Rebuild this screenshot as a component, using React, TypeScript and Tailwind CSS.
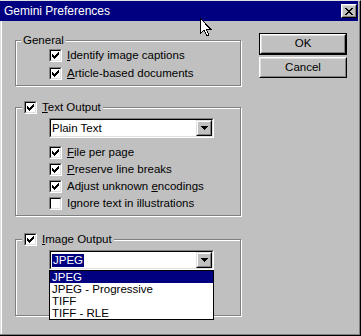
import React from "react";

const FONT = { fontFamily: '"Liberation Sans", Arial, sans-serif' };

function Check({ checked }: { checked: boolean }) {
  return (
    <div className="w-[13px] h-[13px] shrink-0 border border-t-[#808080] border-l-[#808080] border-b-white border-r-white">
      <div className="relative w-[11px] h-[11px] border border-t-black border-l-black border-b-[#dfdfdf] border-r-[#dfdfdf] bg-white">
        {checked && (
          <svg width="7" height="7" viewBox="0 0 7 7" className="absolute left-[1px] top-[1px]" shapeRendering="crispEdges">
            <path d="M0 2h1v3H0z M1 3h1v3H1z M2 4h1v3H2z M3 3h1v3H3z M4 2h1v3H4z M5 1h1v3H5z M6 0h1v3H6z" fill="black" />
          </svg>
        )}
      </div>
    </div>
  );
}

function Row({ checked, children, h }: { checked: boolean; children: React.ReactNode; h: string }) {
  return (
    <div className={`flex items-start ${h}`}>
      <Check checked={checked} />
      <span className="ml-[5px] leading-[13px] whitespace-nowrap">{children}</span>
    </div>
  );
}

function Combo({ children }: { children: React.ReactNode }) {
  return (
    <div className="w-[165px] h-[20px] border border-t-[#808080] border-l-[#808080] border-b-white border-r-white">
      <div className="flex h-full border border-t-black border-l-black border-b-[#dfdfdf] border-r-[#dfdfdf] bg-white">
        <div className="flex-1 flex items-center pl-[1px] leading-[13px]">{children}</div>
        <div className="w-[16px] h-[16px] border border-t-[#dfdfdf] border-l-[#dfdfdf] border-b-black border-r-black">
          <div className="w-full h-full flex items-center justify-center border border-t-white border-l-white border-b-[#808080] border-r-[#808080] bg-[#c0c0c0]">
            <svg width="7" height="4" viewBox="0 0 7 4" shapeRendering="crispEdges">
              <path d="M0 0h7v1H0z M1 1h5v1H1z M2 2h3v1H2z M3 3h1v1H3z" fill="black" />
            </svg>
          </div>
        </div>
      </div>
    </div>
  );
}

function Btn({ children, def }: { children: React.ReactNode; def?: boolean }) {
  const inner = (
    <div className="w-full h-full border border-t-white border-l-white border-b-black border-r-black">
      <div className="w-full h-full flex items-center justify-center border border-t-[#dfdfdf] border-l-[#dfdfdf] border-b-[#808080] border-r-[#808080] bg-[#c0c0c0]">
        {children}
      </div>
    </div>
  );
  if (def) {
    return <div className="w-[88px] h-[22px] border border-black">{inner}</div>;
  }
  return <div className="w-[88px] h-[21px]">{inner}</div>;
}

const groupCls =
  "relative border border-[#808080] shadow-[1px_1px_0_#fff,inset_1px_1px_0_#fff]";

export default function App() {
  return (
    <div
      className="relative w-[361px] h-[336px] bg-[#c0c0c0] text-black text-[11.5px] flex flex-col border-t border-t-[#dfdfdf] border-r border-r-black border-b border-b-black overflow-hidden"
      style={FONT}
    >
      <div className="flex-1 flex flex-col border-r border-r-[#808080] border-b border-b-[#808080]">
        {/* Title bar */}
        <div className="h-[20px] mr-[1px] bg-[#000080] flex items-center">
          <span className="pl-[4px] text-white text-[12px] leading-[14px]">Gemini Preferences</span>
          <div className="ml-auto mr-[1px] w-[16px] h-[14px] border border-t-white border-l-white border-b-black border-r-black">
            <div className="w-full h-full flex items-center justify-center border border-t-[#dfdfdf] border-l-[#dfdfdf] border-b-[#808080] border-r-[#808080] bg-[#c0c0c0]">
              <svg width="8" height="7" viewBox="0 0 8 7" shapeRendering="crispEdges">
                <path d="M0 0h2v1H0z M6 0h2v1H6z M1 1h2v1H1z M5 1h2v1H5z M2 2h4v1H2z M3 3h2v1H3z M2 4h4v1H2z M1 5h2v1H1z M5 5h2v1H5z M0 6h2v1H0z M6 6h2v1H6z" fill="black" />
              </svg>
            </div>
          </div>
        </div>

        {/* Body */}
        <div className="flex-1 flex pl-[15px] shadow-[inset_1px_0_0_#dfdfdf,inset_2px_0_0_#fff]">
          {/* Left column */}
          <div className="w-[226px] flex flex-col">
            {/* General */}
            <div className={`${groupCls} mt-[19px] h-[46px] pl-[33px] pt-[8px]`}>
              <div className="absolute left-[5px] top-[-7px] px-[2px] bg-[#c0c0c0] leading-[13px]">General</div>
              <Row checked h="h-[18px]">
                <u>I</u>dentify image captions
              </Row>
              <Row checked h="h-[18px]">
                <u>A</u>rticle-based documents
              </Row>
            </div>

            {/* Text Output */}
            <div className={`${groupCls} mt-[21px] h-[109px] pl-[33px] pt-[10px]`}>
              <div className="absolute left-[6px] top-[-7px] px-[2px] bg-[#c0c0c0] flex items-start">
                <Check checked />
                <span className="ml-[5px] leading-[13px]">
                  <u>T</u>ext Output
                </span>
              </div>
              <Combo>
                <span>Plain Text</span>
              </Combo>
              <div className="mt-[8px] flex flex-col">
                <Row checked h="h-[17px]">
                  <u>F</u>ile per page
                </Row>
                <Row checked h="h-[17px]">
                  <u>P</u>reserve line breaks
                </Row>
                <Row checked h="h-[17px]">
                  Adjust unknown <u>e</u>ncodings
                </Row>
                <Row checked={false} h="h-[17px]">
                  I<u>g</u>nore text in illustrations
                </Row>
              </div>
            </div>

            {/* Image Output */}
            <div className={`${groupCls} mt-[23px] h-[77px] pl-[33px] pt-[10px]`}>
              <div className="absolute left-[6px] top-[-7px] px-[2px] bg-[#c0c0c0] flex items-start">
                <Check checked />
                <span className="ml-[5px] leading-[13px]">
                  <u>I</u>mage Output
                </span>
              </div>
              <div className="relative w-[165px]">
                <Combo>
                  <span className="bg-[#000080] text-white px-[1px]">JPEG</span>
                </Combo>
                <div className="absolute left-0 top-[20px] w-[165px] h-[50px] border border-black bg-white z-10 leading-[12px]">
                  <div className="h-[12px] bg-[#000080] text-white pl-[2px]">JPEG</div>
                  <div className="h-[12px] pl-[2px]">JPEG - Progressive</div>
                  <div className="h-[12px] pl-[2px]">TIFF</div>
                  <div className="h-[12px] pl-[2px]">TIFF - RLE</div>
                </div>
              </div>
            </div>
          </div>

          {/* Buttons */}
          <div className="ml-[18px] mt-[12px] flex flex-col">
            <Btn def>OK</Btn>
            <div className="mt-[2px]">
              <Btn>Cancel</Btn>
            </div>
          </div>
        </div>
      </div>

      {/* Mouse cursor */}
      <svg
        width="13"
        height="20"
        viewBox="0 0 13 20"
        className="absolute left-[199px] top-[16px] z-20"
        shapeRendering="crispEdges"
      >
        <path d="M1.5 1.5 L1.5 16.5 L5 13 L8 19 L10 18 L7.2 12 L11.5 12 Z" fill="white" stroke="black" strokeWidth="1" />
      </svg>
    </div>
  );
}
